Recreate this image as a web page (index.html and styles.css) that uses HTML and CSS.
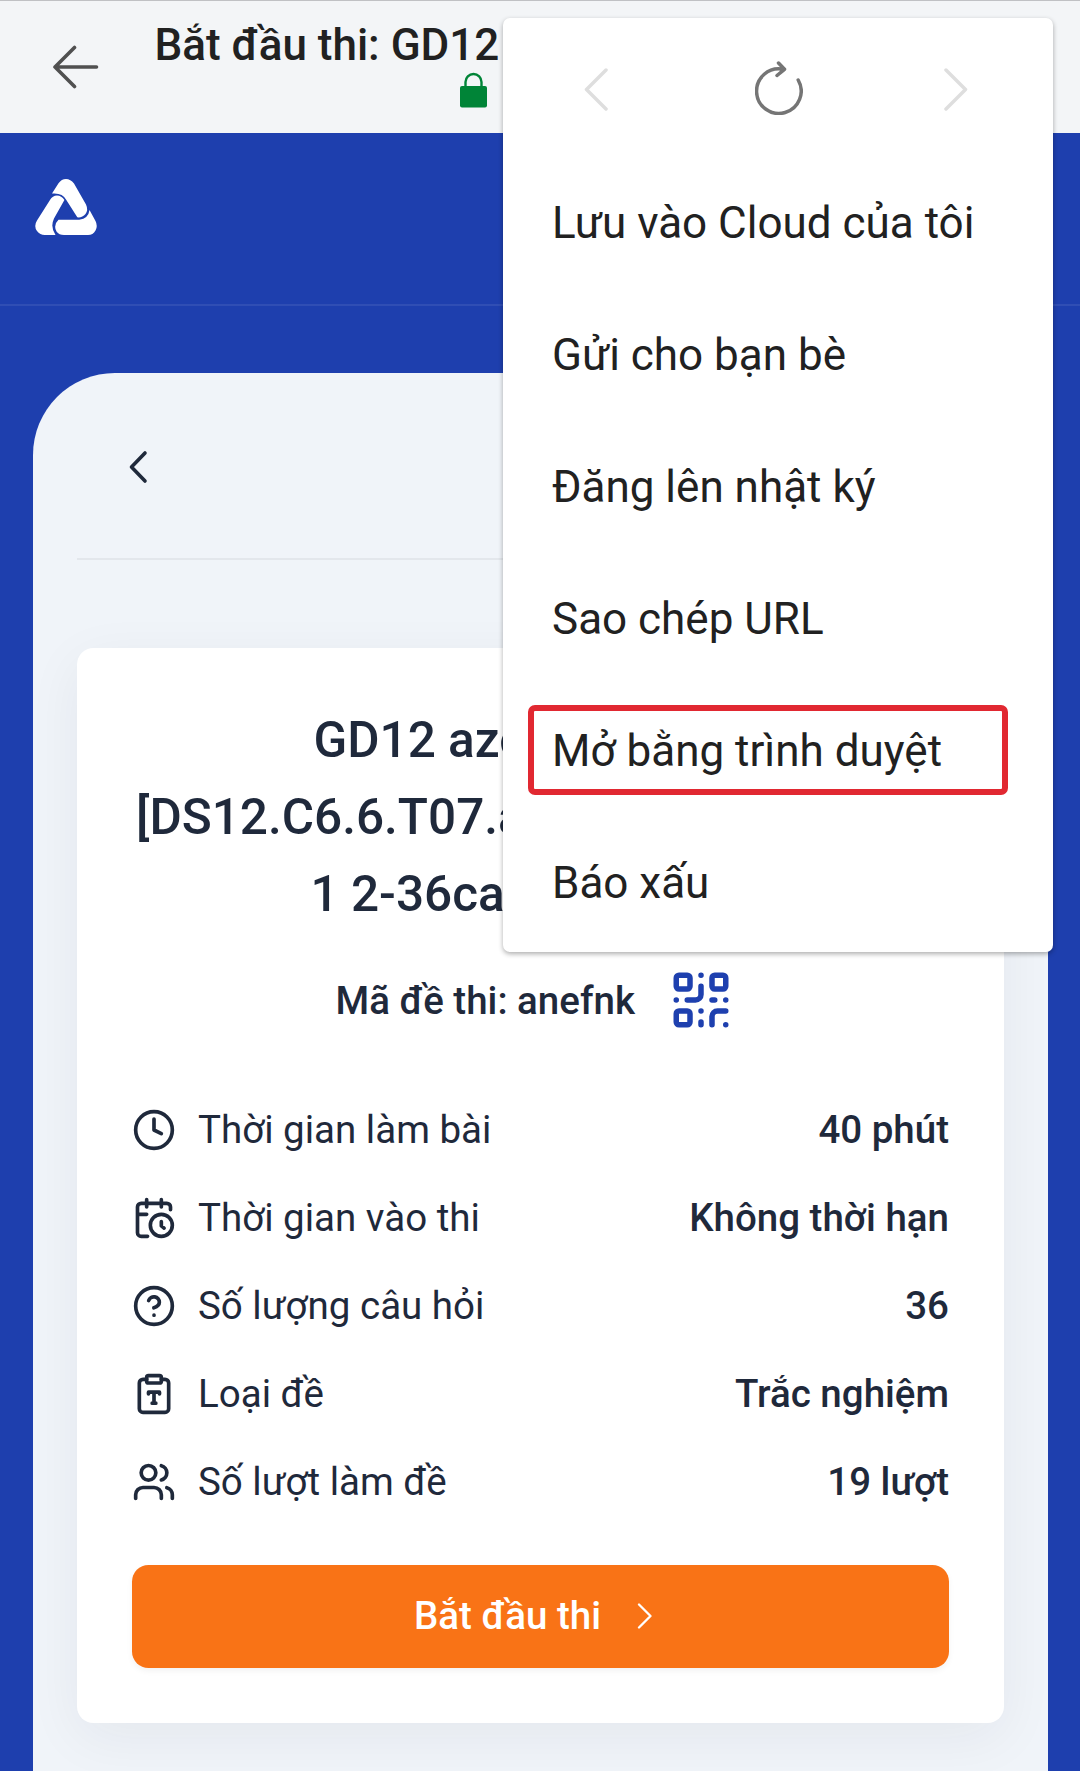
FILE: index.html
```html
<!DOCTYPE html>
<html lang="vi">
<head>
<meta charset="utf-8">
<title>Bắt đầu thi</title>
<link rel="stylesheet" href="styles.css">
</head>
<body>
<div class="screen">
  <header class="topbar">
    <svg class="back" viewBox="0 0 48 44" fill="none"><path d="M22.500 2.500 3 22 22.500 41.500M3 22H44.500"/></svg>
    <div class="heading">
      <div class="page-title">Bắt đầu thi: GD12</div>
      <svg class="lock" viewBox="0 0 27 36"><path d="M5.500 15V10a8 8 0 0 1 16 0V15" fill="none" stroke="#008437" stroke-width="2.400"/><rect y="14" width="27" height="21.500" rx="2" fill="#008437"/></svg>
    </div>
  </header>

  <div class="brandbar">
    <svg class="logo" viewBox="0 0 62 56" fill="#fff">
      <path d="M17 14.500 23.500 4.300Q26.500 0 31 0T39 4.500L51 25.500Q53.500 31 50.500 35 47 39 42.300 38.300L31 20.500Q27.500 13.500 17 14.500Z"/>
      <path d="M29.400 21Q26.500 16.500 22 16.500 17.500 16.700 15 21L2 41.500Q-1.500 47 2 52 5 56 9.800 56H20.500Q15 48 19 39.500Z"/>
      <path d="M23.500 40.800H44.200Q53.500 39.500 54.500 31L60.500 42Q63 47 60.500 51.500 58 56 53 56H29Q24 56 21.500 52.500 18 46 23.500 40.800Z"/>
    </svg>
  </div>

  <main class="panel">
    <div class="panel-head">
      <svg class="panel-back" viewBox="0 0 20 34" fill="none"><path d="M17 3 3.500 17 17 31"/></svg>
    </div>

    <section class="card">
      <h1 class="exam-title">
        <span class="line line-a">GD12 azo</span>
        <span class="line line-b">[DS12.C6.6.T07.a</span>
        <span class="line line-c">1 2-36ca</span>
      </h1>
      <div class="code">
        <span class="code-text">Mã đề thi: anefnk</span>
        <svg class="qr" viewBox="0 0 24 24"><rect x="3" y="3" width="5" height="5" rx="1"/><rect x="16" y="3" width="5" height="5" rx="1"/><rect x="3" y="16" width="5" height="5" rx="1"/><path d="M21 16h-3a2 2 0 0 0-2 2v3M21 21v.01M12 7v3a2 2 0 0 1-2 2H7M3 12h.01M12 3h.01M12 16v.01M16 12h1M21 12v.01M12 21v-1"/></svg>
      </div>
      <ul class="facts">
        <li><svg class="icon" viewBox="0 0 24 24"><circle cx="12" cy="12" r="10"/><path d="M12 6v6l4 2"/></svg><span class="label">Thời gian làm bài</span><span class="value">40 phút</span></li>
        <li><svg class="icon" viewBox="0 0 24 24"><path d="M21 7.500V6a2 2 0 0 0-2-2H5a2 2 0 0 0-2 2v14a2 2 0 0 0 2 2h3.500M16 2v4M8 2v4M3 10h5M17.500 17.500 16 16.300V14"/><circle cx="16" cy="16" r="6"/></svg><span class="label">Thời gian vào thi</span><span class="value">Không thời hạn</span></li>
        <li><svg class="icon" viewBox="0 0 24 24"><circle cx="12" cy="12" r="10"/><path d="M9.090 9a3 3 0 0 1 5.830 1c0 2-3 3-3 3M12 17h.01"/></svg><span class="label">Số lượng câu hỏi</span><span class="value">36</span></li>
        <li><svg class="icon" viewBox="0 0 24 24"><rect x="8" y="2" width="8" height="4" rx="1"/><path d="M16 4h2a2 2 0 0 1 2 2v14a2 2 0 0 1-2 2H6a2 2 0 0 1-2-2V6a2 2 0 0 1 2-2h2M9 12v-1h6v1M11 17h2M12 11v6"/></svg><span class="label">Loại đề</span><span class="value">Trắc nghiệm</span></li>
        <li><svg class="icon" viewBox="0 0 24 24"><path d="M16 21v-2a4 4 0 0 0-4-4H6a4 4 0 0 0-4 4v2M22 21v-2a4 4 0 0 0-3-3.870M16 3.130a4 4 0 0 1 0 7.750"/><circle cx="9" cy="7" r="4"/></svg><span class="label">Số lượt làm đề</span><span class="value">19 lượt</span></li>
      </ul>
      <button class="start"><span>Bắt đầu thi</span><svg class="start-arrow" viewBox="0 0 16 26" fill="none"><path d="M2 1.500 13.500 13 2 24.500"/></svg></button>
    </section>
  </main>

  <nav class="menu">
    <div class="menu-nav">
      <svg class="nav-step" viewBox="0 0 24 43" fill="none"><path d="M22 2 2.500 21.500 22 41"/></svg>
      <svg class="reload" viewBox="0 0 48 54" fill="none"><path d="M43.200 19A22.300 22.300 0 1 1 28 8.200M23.500 2 29.500 8.300 22 14.500"/></svg>
      <svg class="nav-step" viewBox="0 0 24 43" fill="none"><path d="M2 2 21.500 21.500 2 41"/></svg>
    </div>
    <div class="item">Lưu vào Cloud của tôi</div>
    <div class="item">Gửi cho bạn bè</div>
    <div class="item">Đăng lên nhật ký</div>
    <div class="item">Sao chép URL</div>
    <div class="item marked">Mở bằng trình duyệt</div>
    <div class="item">Báo xấu</div>
  </nav>
</div>
</body>
</html>
```
FILE: styles.css
```css
* { box-sizing: border-box; }
body { margin: 0; font-family: Roboto, "Liberation Sans", sans-serif; }
.screen {
  position: relative;
  display: flex;
  flex-direction: column;
  width: 1080px;
  height: 1771px;
  overflow: hidden;
  background: #1e3fae;
}
svg { display: block; flex: none; }

/* in-app browser bar */
.topbar {
  display: flex;
  flex: none;
  height: 133px;
  padding-left: 52px;
  background: #f3f5f7;
  border-top: 1px solid #c0c1c4;
}
.back { width: 48px; height: 44px; margin-top: 43.500px; stroke: #505050; stroke-width: 3.600; stroke-linecap: round; stroke-linejoin: round; }
.heading { margin-left: 54.500px; padding-top: 17px; }
.page-title { font-size: 44px; line-height: 54px; font-weight: 500; color: #212121; white-space: nowrap; }
.lock { width: 27px; height: 36px; margin: 0 0 0 305.500px; }

.brandbar { flex: none; height: 173px; padding: 46px 0 0 35px; border-bottom: 2px solid #304eb4; }
.logo { width: 62px; height: 56px; }

/* exam panel */
.panel {
  flex: none;
  width: 1015px;
  height: 1500px;
  margin: 67px 0 0 33px;
  padding: 0 44px;
  background: #f0f4f9;
  border-radius: 82px 82px 0 0;
}
.panel-head { height: 187px; padding: 76.500px 0 0 50.500px; border-bottom: 2px solid #e3e7ec; }
.panel-back { width: 20px; height: 34px; stroke: #1f293b; stroke-width: 3.600; stroke-linecap: round; stroke-linejoin: round; }
.card {
  height: 1075px;
  margin-top: 88px;
  padding: 54px 55px 0;
  background: #fff;
  border-radius: 16.500px;
  box-shadow: 0 14px 55px rgba(30, 41, 59, 0.06);
  color: #1f293b;
}
.exam-title { margin: 0; font-size: 49.500px; line-height: 77px; font-weight: 500; }
.line { display: block; white-space: nowrap; }
.line-a { padding-left: 181.500px; }
.line-b { padding-left: 4px; }
.line-c { padding-left: 178.500px; }
.code { display: flex; align-items: center; height: 66px; margin: 34px 0 0 203.500px; }
.code-text { width: 332.500px; font-size: 38.500px; font-weight: 500; white-space: nowrap; }
.qr { width: 66px; height: 66px; fill: none; stroke: #1e40af; stroke-width: 2; stroke-linecap: round; stroke-linejoin: round; }
.facts {
  display: flex;
  flex-direction: column;
  gap: 33px;
  margin: 69px 0 0;
  padding: 0;
  list-style: none;
  font-size: 38.500px;
  line-height: 55px;
}
.facts li { display: flex; align-items: center; }
.icon { width: 44px; height: 44px; margin-right: 22px; fill: none; stroke: #1f293b; stroke-width: 2; stroke-linecap: round; stroke-linejoin: round; }
.value { margin-left: auto; font-weight: 500; }
.start {
  display: flex;
  align-items: center;
  justify-content: center;
  gap: 36px;
  width: 817px;
  height: 103px;
  margin-top: 56px;
  padding: 0 14px 2px 0;
  border: 0;
  border-radius: 16.500px;
  background: #f97316;
  box-shadow: 0 3px 6px rgba(0, 0, 0, 0.05);
  color: #fff;
  font: 500 38.500px/55px Roboto, "Liberation Sans", sans-serif;
}
.start-arrow { width: 16px; height: 26px; stroke: #fff; stroke-width: 2.300; stroke-linecap: round; stroke-linejoin: round; }

/* overflow menu, over the page */
.menu {
  position: absolute;
  left: 503px;
  top: 18px;
  width: 549.500px;
  height: 933.500px;
  border-radius: 7px;
  background: #fff;
  box-shadow: 0 2px 5px rgba(0, 0, 0, 0.32);
  color: #212121;
}
.menu-nav { display: flex; align-items: flex-start; height: 139px; padding: 43px 0 0 81px; }
.nav-step { width: 24px; height: 43px; margin-top: 7px; stroke: #dedede; stroke-width: 3.500; stroke-linecap: round; stroke-linejoin: round; }
.reload { width: 48px; height: 54px; margin: 0 141px 0 147px; stroke: #757575; stroke-width: 3.500; stroke-linecap: round; stroke-linejoin: round; }
.item { height: 132px; padding-left: 49px; font-size: 44px; line-height: 132px; white-space: nowrap; }
.marked {
  height: 90px;
  margin: 20px 45px 22px 25px;
  padding-left: 18px;
  border: 6px solid #e12831;
  border-radius: 7px;
  line-height: 80px;
}
```
